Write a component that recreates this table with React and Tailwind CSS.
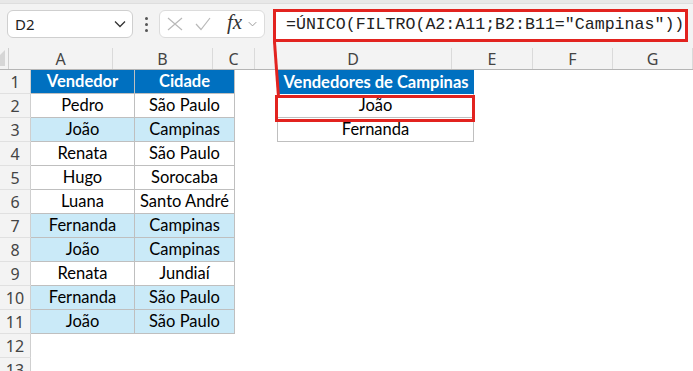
import React from 'react';

const COLS = [
  { key: 'A', w: 104 },
  { key: 'B', w: 100 },
  { key: 'C', w: 42 },
  { key: 'D', w: 197 },
  { key: 'E', w: 81 },
  { key: 'F', w: 80 },
  { key: 'G', w: 80 },
];

const DATA = [
  ['Pedro', 'São Paulo', false],
  ['João', 'Campinas', true],
  ['Renata', 'São Paulo', false],
  ['Hugo', 'Sorocaba', false],
  ['Luana', 'Santo André', false],
  ['Fernanda', 'Campinas', true],
  ['João', 'Campinas', true],
  ['Renata', 'Jundiaí', false],
  ['Fernanda', 'São Paulo', true],
  ['João', 'São Paulo', true],
];

const UNIQUE = ['João', 'Fernanda'];

const cellFont = "font-['Lato','Liberation_Sans',sans-serif] text-[16.5px]";

const Chevron = ({ className }) => (
  <svg viewBox="0 0 12 8" className={className} fill="none" stroke="currentColor" strokeWidth="1.3">
    <path d="M1 1.5 L6 6.5 L11 1.5" />
  </svg>
);

const Toolbar = () => (
  <div className="h-[48px] bg-[#f3f3f3] flex flex-col">
    <div className="h-[4px] bg-[#e8e8e8] border-b border-[#dedede]" />
    <div className="flex items-start pt-[6px] pl-[7px] font-['Noto_Sans',sans-serif]">
      <div className="w-[126px] h-[28px] bg-white border border-[#cfcfcf] rounded-[6px] flex items-center justify-between pl-[7px] pr-[6px]">
        <span className="text-[15px] text-[#222]">D2</span>
        <Chevron className="w-[12px] h-[8px] text-[#333]" />
      </div>
      <div className="w-[26px] h-[28px] flex flex-col items-center justify-center gap-[3px]">
        <span className="w-[3px] h-[3px] bg-[#555] rounded-full" />
        <span className="w-[3px] h-[3px] bg-[#555] rounded-full" />
        <span className="w-[3px] h-[3px] bg-[#555] rounded-full" />
      </div>
      <div className="w-[106px] h-[28px] bg-white border border-[#dcdcdc] rounded-[6px] flex items-center pl-[7px] gap-[12px]">
        <svg viewBox="0 0 16 14" className="w-[16px] h-[14px]" stroke="#b9b9b9" strokeWidth="1.2">
          <path d="M1 1 L15 13 M15 1 L1 13" />
        </svg>
        <svg viewBox="0 0 16 14" className="w-[16px] h-[14px]" fill="none" stroke="#b9b9b9" strokeWidth="1.2">
          <path d="M1 7 L6 12.5 L15 1" />
        </svg>
        <div className="flex items-center gap-[6px] ml-[4px]">
          <span className="font-['Liberation_Serif',serif] italic text-[21px] leading-none text-[#333] -mt-[3px]">fx</span>
          <Chevron className="w-[9px] h-[6px] text-[#999]" />
        </div>
      </div>
      <div className="ml-[8px] w-[415px] h-[33px] -mt-[1px] bg-white border-[3px] border-[#e2231f] flex items-center pl-[10px]">
        <span className="font-['Liberation_Mono',monospace] text-[16.6px] text-[#222] whitespace-nowrap">
          =ÚNICO(FILTRO(A2:A11;B2:B11="Campinas"))
        </span>
      </div>
    </div>
  </div>
);

const ColumnHeader = () => (
  <div className="h-[22px] flex bg-[#f3f3f3] border-b border-[#b5b5b5] font-['Noto_Sans',sans-serif] text-[16px] text-[#444]">
    <div className="w-[31px] border-r border-[#cfcfcf] relative">
      <div className="absolute right-[3px] bottom-[3px] w-0 h-0 border-l-[16px] border-l-transparent border-b-[16px] border-b-[#d6d6d6]" />
    </div>
    {COLS.map((c) => (
      <div
        key={c.key}
        style={{ width: c.w }}
        className="shrink-0 border-r border-[#dadada] flex items-center justify-center leading-none"
      >
        {c.key}
      </div>
    ))}
  </div>
);

const RowNum = ({ n }) => (
  <div className="w-[31px] shrink-0 bg-[#f3f3f3] border-r border-[#cfcfcf] border-b border-b-[#e0e0e0] flex items-center justify-center font-['Noto_Sans',sans-serif] text-[16px] text-[#444]">
    {n}
  </div>
);

const Row = ({ n }) => {
  const isHead = n === 1;
  const rec = n >= 2 && n <= 11 ? DATA[n - 2] : null;
  const tableCell = isHead
    ? 'bg-[#0070c0] text-white font-bold border-r border-b border-[#bfbfbf]'
    : rec
    ? `${rec[2] ? 'bg-[#caeaf8]' : 'bg-white'} text-black border-r border-b border-[#bfbfbf]`
    : '';
  const dText = n === 1 ? 'Vendedores de Campinas' : UNIQUE[n - 2];
  const dCell =
    n === 1
      ? 'bg-[#0070c0] text-white font-bold border-l border-l-[#bfbfbf]'
      : n <= 3
      ? 'bg-white text-black border-l border-r border-b border-[#bfbfbf]'
      : '';

  return (
    <div className="h-[24px] flex">
      <RowNum n={n} />
      <div className={`w-[104px] shrink-0 flex items-center justify-center ${cellFont} ${tableCell}`}>
        {isHead ? 'Vendedor' : rec ? rec[0] : ''}
      </div>
      <div className={`w-[100px] shrink-0 flex items-center justify-center whitespace-nowrap ${cellFont} ${tableCell}`}>
        {isHead ? 'Cidade' : rec ? rec[1] : ''}
      </div>
      <div className="w-[42px] shrink-0" />
      <div className={`w-[197px] shrink-0 flex items-center justify-center overflow-hidden whitespace-nowrap ${cellFont} ${dCell}`}>
        {n <= 3 ? dText : ''}
      </div>
      <div className="flex-1" />
    </div>
  );
};

export default function App() {
  return (
    <div className="w-[693px] h-[371px] overflow-hidden bg-white relative">
      <Toolbar />
      <ColumnHeader />
      {Array.from({ length: 13 }, (_, i) => (
        <Row key={i} n={i + 1} />
      ))}

      {/* callout: formula -> result cell */}
      <svg className="absolute left-0 top-0 pointer-events-none" width="693" height="371">
        <line x1="274.5" y1="42" x2="278.5" y2="97" stroke="#e2231f" strokeWidth="3" />
      </svg>
      <div className="absolute left-[275px] top-[95px] w-[200px] h-[27px] border-[3px] border-[#e2231f] pointer-events-none" />
    </div>
  );
}
